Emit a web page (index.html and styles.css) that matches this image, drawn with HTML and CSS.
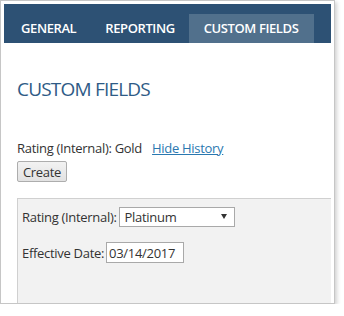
FILE: index.html
```html
<!DOCTYPE html>
<html lang="en">
<head>
  <meta charset="UTF-8" />
  <title>Custom Fields</title>
  <link rel="stylesheet" href="styles.css">
</head>
<body>

  <div class="frame">
    <div class="tabs">
      <a class="tab">GENERAL</a>
      <a class="tab">REPORTING</a>
      <a class="tab active">CUSTOM FIELDS</a>
    </div>

    <div class="content">
      <h1 class="title">CUSTOM FIELDS</h1>

      <p class="status">Rating (Internal): Gold <a href="#" class="history-link">Hide History</a></p>
      <button class="btn">Create</button>

      <div class="panel">
        <div class="field">
          <label>Rating (Internal):</label>
          <span class="select-wrap">
            <select class="select">
              <option>Platinum</option>
              <option>Gold</option>
              <option>Silver</option>
            </select>
            <svg class="select-arrow" width="6" height="5" viewBox="0 0 6 5"><path d="M0 0H6L3 5Z" fill="#333"/></svg>
          </span>
        </div>
        <div class="field">
          <label>Effective Date:</label>
          <input class="date" type="text" value="03/14/2017">
        </div>
      </div>
    </div>
  </div>

</body>
</html>
```

FILE: styles.css
```css
body {
  margin: 0;
  padding: 0;
  background-color: #fff;
  font-family: 'Open Sans', 'Segoe UI', sans-serif;
  color: #333;
}

.frame {
  width: 335px;
  height: 304px;
  box-sizing: border-box;
  border: 1px solid #c6c6c6;
  padding: 3px 3px 0 3px;
  box-shadow: 2px 2px 4px rgba(0, 0, 0, 0.18);
  display: flex;
  flex-direction: column;
  overflow: hidden;
}

.tabs {
  background-color: #2d5174;
  height: 39px;
  box-sizing: border-box;
  padding: 10px 0 0 2px;
  display: flex;
}

.tab {
  color: #fff;
  font-size: 13px;
  font-weight: 600;
  letter-spacing: -0.4px;
  line-height: 29px;
  padding: 0 14px 0 15px;
}

.tab.active {
  background-color: #51708c;
  padding: 0 16px 0 15px;
}

.content {
  flex: 1;
  padding-left: 13px;
  display: flex;
  flex-direction: column;
  align-items: flex-start;
}

.title {
  margin: 34px 0 0 0;
  font-size: 19px;
  font-weight: 400;
  letter-spacing: -0.8px;
  line-height: 24px;
  color: #2e5b86;
}

.status {
  margin: 38px 0 0 0;
  font-size: 13px;
  letter-spacing: -0.3px;
  line-height: 18px;
}

.history-link {
  color: #2a78b0;
  margin-left: 7px;
}

.btn {
  margin-top: 4px;
  width: 50px;
  height: 21px;
  padding: 0;
  font-family: inherit;
  font-size: 13px;
  letter-spacing: -0.3px;
  color: #333;
  border: 1px solid #adadad;
  border-radius: 2px;
  background: linear-gradient(#f2f2f2, #e2e2e2);
}

.panel {
  margin-top: 16px;
  flex: 1;
  align-self: stretch;
  background-color: #f2f2f2;
  border-top: 1px solid #d0d0d0;
  border-left: 1px solid #d0d0d0;
  padding: 8px 0 0 4px;
}

.field {
  display: flex;
  align-items: center;
  gap: 2px;
  font-size: 13px;
  letter-spacing: -0.3px;
  margin-bottom: 15px;
}

.select-wrap {
  position: relative;
  display: inline-block;
}

.select {
  appearance: none;
  width: 116px;
  height: 20px;
  box-sizing: border-box;
  border: 1px solid #a9a9a9;
  background-color: #fff;
  font-family: inherit;
  font-size: 13px;
  letter-spacing: -0.3px;
  color: #333;
  padding: 0 0 0 5px;
  border-radius: 0;
}

.select-arrow {
  position: absolute;
  right: 8px;
  top: 7px;
}

.date {
  width: 78px;
  height: 21px;
  box-sizing: border-box;
  border: 1px solid #a9a9a9;
  font-family: inherit;
  font-size: 13px;
  letter-spacing: -0.3px;
  color: #333;
  padding: 0 2px;
}
```
